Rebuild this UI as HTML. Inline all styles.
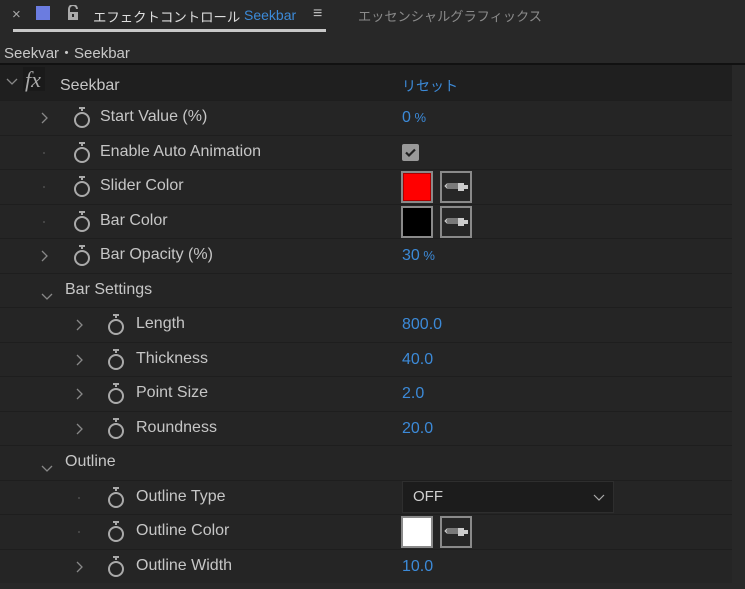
<!DOCTYPE html>
<html><head><meta charset="utf-8"><style>
*{margin:0;padding:0;box-sizing:border-box}
body{width:745px;height:589px;background:#282828;overflow:hidden;position:relative;font-family:"Liberation Sans","Noto Sans CJK JP",sans-serif;color:#c4c4c4}
.a{position:absolute;white-space:nowrap}
.row{position:absolute;left:0;width:732px;height:34.5px;background:#252525;border-top:1px solid #1e1e1e}
.lbl{position:absolute;font-size:16px;color:#c6c6c6;top:7px}
.val{position:absolute;left:402px;top:8px;font-size:16px;color:#3c8ad8}
.chev{position:absolute;top:10px}
.sw{position:absolute;top:6px}
.dot{position:absolute;left:43px;top:16px;width:2px;height:2px;background:#444}
.box{position:absolute;width:32px;height:32px;border:2px solid #8a8a8a;top:1px}
</style></head><body>
<!-- tab bar -->
<div class="a" style="left:12px;top:6px;font-size:15px;color:#aaa">×</div>
<div class="a" style="left:36px;top:6px;width:14px;height:14px;background:#6b7ce0"></div>
<svg class="a" style="left:66px;top:5px" width="14" height="16" viewBox="0 0 14 16"><path d="M3 7V4a4 4 0 0 1 8 0" fill="none" stroke="#aaa" stroke-width="2"/><rect x="2" y="7" width="10" height="8" fill="#aaa"/><rect x="6" y="9" width="2" height="3" fill="#282828"/></svg>
<div class="a" style="left:93px;top:6px;font-size:13.4px;color:#ddd">エフェクトコントロール</div>
<div class="a" style="left:244px;top:7px;font-size:14px;color:#3c8ad8">Seekbar</div>
<div class="a" style="left:313px;top:5px;font-size:16px;color:#bbb">≡</div>
<div class="a" style="left:13px;top:29px;width:313px;height:3px;background:#c8c8c8"></div>
<div class="a" style="left:358px;top:6px;font-size:13.2px;color:#8a8a8a">エッセンシャルグラフィックス</div>
<div class="a" style="left:4px;top:42px;font-size:15px;color:#c8c8c8">Seekvar・Seekbar</div>
<div class="a" style="left:0;top:63px;width:745px;height:2px;background:#111"></div>
<div class="a" style="left:732px;top:65px;width:13px;height:524px;background:#282828"></div>
<!-- fx row -->
<div class="a" style="left:0;top:65px;width:732px;height:35px;background:#1f1f1f"></div>
<svg class="a" style="left:6px;top:78px" width="12" height="8"><path d="M1 1l5 5 5-5" fill="none" stroke="#888" stroke-width="1.3"/></svg>
<div class="a" style="left:23px;top:67px;width:22px;height:24px;background:#1a1a1a;font-family:'Liberation Serif',serif;font-style:italic;font-size:22px;color:#aaa;padding-left:2px">fx</div>
<div class="a" style="left:60px;top:77px;font-size:16px;color:#c6c6c6">Seekbar</div>
<div class="a" style="left:402px;top:76px;font-size:14px;color:#3c8ad8">リセット</div>

<div class="row" style="top:100px"><span class="chev" style="left:40px"><svg width="8" height="12"><path d="M2 1l5 5-5 5" fill="none" stroke="#888" stroke-width="1.3"/></svg></span><svg class="sw" style="left:73px" width="18" height="22"><path d="M6 1h6M9 1v3" stroke="#aaa" stroke-width="2"/><circle cx="9" cy="13" r="7" fill="none" stroke="#aaa" stroke-width="2"/></svg><span class="lbl" style="left:100px">Start Value (%)</span><span class="val">0<span style="font-size:13px"> %</span></span></div>
<div class="row" style="top:134.5px"><span class="dot"></span><svg class="sw" style="left:73px" width="18" height="22"><path d="M6 1h6M9 1v3" stroke="#aaa" stroke-width="2"/><circle cx="9" cy="13" r="7" fill="none" stroke="#aaa" stroke-width="2"/></svg><span class="lbl" style="left:100px">Enable Auto Animation</span><span class="a" style="left:402px;top:8px;width:17px;height:17px;background:#999;border-radius:2px"><svg width="17" height="17"><path d="M4 8.5l3 3 6-6" fill="none" stroke="#222" stroke-width="2.2"/></svg></span></div>
<div class="row" style="top:169px"><span class="dot"></span><svg class="sw" style="left:73px" width="18" height="22"><path d="M6 1h6M9 1v3" stroke="#aaa" stroke-width="2"/><circle cx="9" cy="13" r="7" fill="none" stroke="#aaa" stroke-width="2"/></svg><span class="lbl" style="left:100px">Slider Color</span><span class="box" style="left:401px;background:#f00;box-shadow:inset 0 0 0 1px #a00"></span><span class="box" style="left:440px;background:#262626"><svg width="28" height="28"><path d="M3 13h14M3 13l2-2h12v4H5z" fill="none" stroke="#ccc" stroke-width="1"/><rect x="16" y="10" width="6" height="8" fill="#ccc"/><rect x="22" y="12" width="4" height="4" fill="#ccc"/></svg></span></div>
<div class="row" style="top:203.5px"><span class="dot"></span><svg class="sw" style="left:73px" width="18" height="22"><path d="M6 1h6M9 1v3" stroke="#aaa" stroke-width="2"/><circle cx="9" cy="13" r="7" fill="none" stroke="#aaa" stroke-width="2"/></svg><span class="lbl" style="left:100px">Bar Color</span><span class="box" style="left:401px;background:#000"></span><span class="box" style="left:440px;background:#262626"><svg width="28" height="28"><path d="M3 13h14M3 13l2-2h12v4H5z" fill="none" stroke="#ccc" stroke-width="1"/><rect x="16" y="10" width="6" height="8" fill="#ccc"/><rect x="22" y="12" width="4" height="4" fill="#ccc"/></svg></span></div>
<div class="row" style="top:238px"><span class="chev" style="left:40px"><svg width="8" height="12"><path d="M2 1l5 5-5 5" fill="none" stroke="#888" stroke-width="1.3"/></svg></span><svg class="sw" style="left:73px" width="18" height="22"><path d="M6 1h6M9 1v3" stroke="#aaa" stroke-width="2"/><circle cx="9" cy="13" r="7" fill="none" stroke="#aaa" stroke-width="2"/></svg><span class="lbl" style="left:100px">Bar Opacity (%)</span><span class="val">30<span style="font-size:13px"> %</span></span></div>
<div class="row" style="top:272.5px"><span class="chev" style="left:41px;top:13px"><svg width="12" height="8"><path d="M1 2l5 5 5-5" fill="none" stroke="#888" stroke-width="1.3"/></svg></span><span class="lbl" style="left:65px">Bar Settings</span></div>
<div class="row" style="top:307px"><span class="chev" style="left:75px"><svg width="8" height="12"><path d="M2 1l5 5-5 5" fill="none" stroke="#888" stroke-width="1.3"/></svg></span><svg class="sw" style="left:107px" width="18" height="22"><path d="M6 1h6M9 1v3" stroke="#aaa" stroke-width="2"/><circle cx="9" cy="13" r="7" fill="none" stroke="#aaa" stroke-width="2"/></svg><span class="lbl" style="left:136px">Length</span><span class="val">800.0</span></div>
<div class="row" style="top:341.5px"><span class="chev" style="left:75px"><svg width="8" height="12"><path d="M2 1l5 5-5 5" fill="none" stroke="#888" stroke-width="1.3"/></svg></span><svg class="sw" style="left:107px" width="18" height="22"><path d="M6 1h6M9 1v3" stroke="#aaa" stroke-width="2"/><circle cx="9" cy="13" r="7" fill="none" stroke="#aaa" stroke-width="2"/></svg><span class="lbl" style="left:136px">Thickness</span><span class="val">40.0</span></div>
<div class="row" style="top:376px"><span class="chev" style="left:75px"><svg width="8" height="12"><path d="M2 1l5 5-5 5" fill="none" stroke="#888" stroke-width="1.3"/></svg></span><svg class="sw" style="left:107px" width="18" height="22"><path d="M6 1h6M9 1v3" stroke="#aaa" stroke-width="2"/><circle cx="9" cy="13" r="7" fill="none" stroke="#aaa" stroke-width="2"/></svg><span class="lbl" style="left:136px">Point Size</span><span class="val">2.0</span></div>
<div class="row" style="top:410.5px"><span class="chev" style="left:75px"><svg width="8" height="12"><path d="M2 1l5 5-5 5" fill="none" stroke="#888" stroke-width="1.3"/></svg></span><svg class="sw" style="left:107px" width="18" height="22"><path d="M6 1h6M9 1v3" stroke="#aaa" stroke-width="2"/><circle cx="9" cy="13" r="7" fill="none" stroke="#aaa" stroke-width="2"/></svg><span class="lbl" style="left:136px">Roundness</span><span class="val">20.0</span></div>
<div class="row" style="top:445px"><span class="chev" style="left:41px;top:13px"><svg width="12" height="8"><path d="M1 2l5 5 5-5" fill="none" stroke="#888" stroke-width="1.3"/></svg></span><span class="lbl" style="left:65px">Outline</span></div>
<div class="row" style="top:479.5px"><span class="dot" style="left:78px"></span><svg class="sw" style="left:107px" width="18" height="22"><path d="M6 1h6M9 1v3" stroke="#aaa" stroke-width="2"/><circle cx="9" cy="13" r="7" fill="none" stroke="#aaa" stroke-width="2"/></svg><span class="lbl" style="left:136px">Outline Type</span><span class="a" style="left:402px;top:0;width:212px;height:32px;background:#1c1c1c;border:1px solid #2e2e2e"><span class="a" style="left:10px;top:6px;font-size:15px;color:#d0d0d0">OFF</span><svg class="a" style="left:190px;top:12px" width="12" height="8"><path d="M1 1l5 5 5-5" fill="none" stroke="#aaa" stroke-width="1.2"/></svg></span></div>
<div class="row" style="top:514px"><span class="dot" style="left:78px"></span><svg class="sw" style="left:107px" width="18" height="22"><path d="M6 1h6M9 1v3" stroke="#aaa" stroke-width="2"/><circle cx="9" cy="13" r="7" fill="none" stroke="#aaa" stroke-width="2"/></svg><span class="lbl" style="left:136px">Outline Color</span><span class="box" style="left:401px;background:#fff"></span><span class="box" style="left:440px;background:#262626"><svg width="28" height="28"><path d="M3 13h14M3 13l2-2h12v4H5z" fill="none" stroke="#ccc" stroke-width="1"/><rect x="16" y="10" width="6" height="8" fill="#ccc"/><rect x="22" y="12" width="4" height="4" fill="#ccc"/></svg></span></div>
<div class="row" style="top:548.5px"><span class="chev" style="left:75px"><svg width="8" height="12"><path d="M2 1l5 5-5 5" fill="none" stroke="#888" stroke-width="1.3"/></svg></span><svg class="sw" style="left:107px" width="18" height="22"><path d="M6 1h6M9 1v3" stroke="#aaa" stroke-width="2"/><circle cx="9" cy="13" r="7" fill="none" stroke="#aaa" stroke-width="2"/></svg><span class="lbl" style="left:136px">Outline Width</span><span class="val">10.0</span></div>
<div class="a" style="left:0;top:583px;width:732px;height:6px;background:#282828"></div>
</body></html>
